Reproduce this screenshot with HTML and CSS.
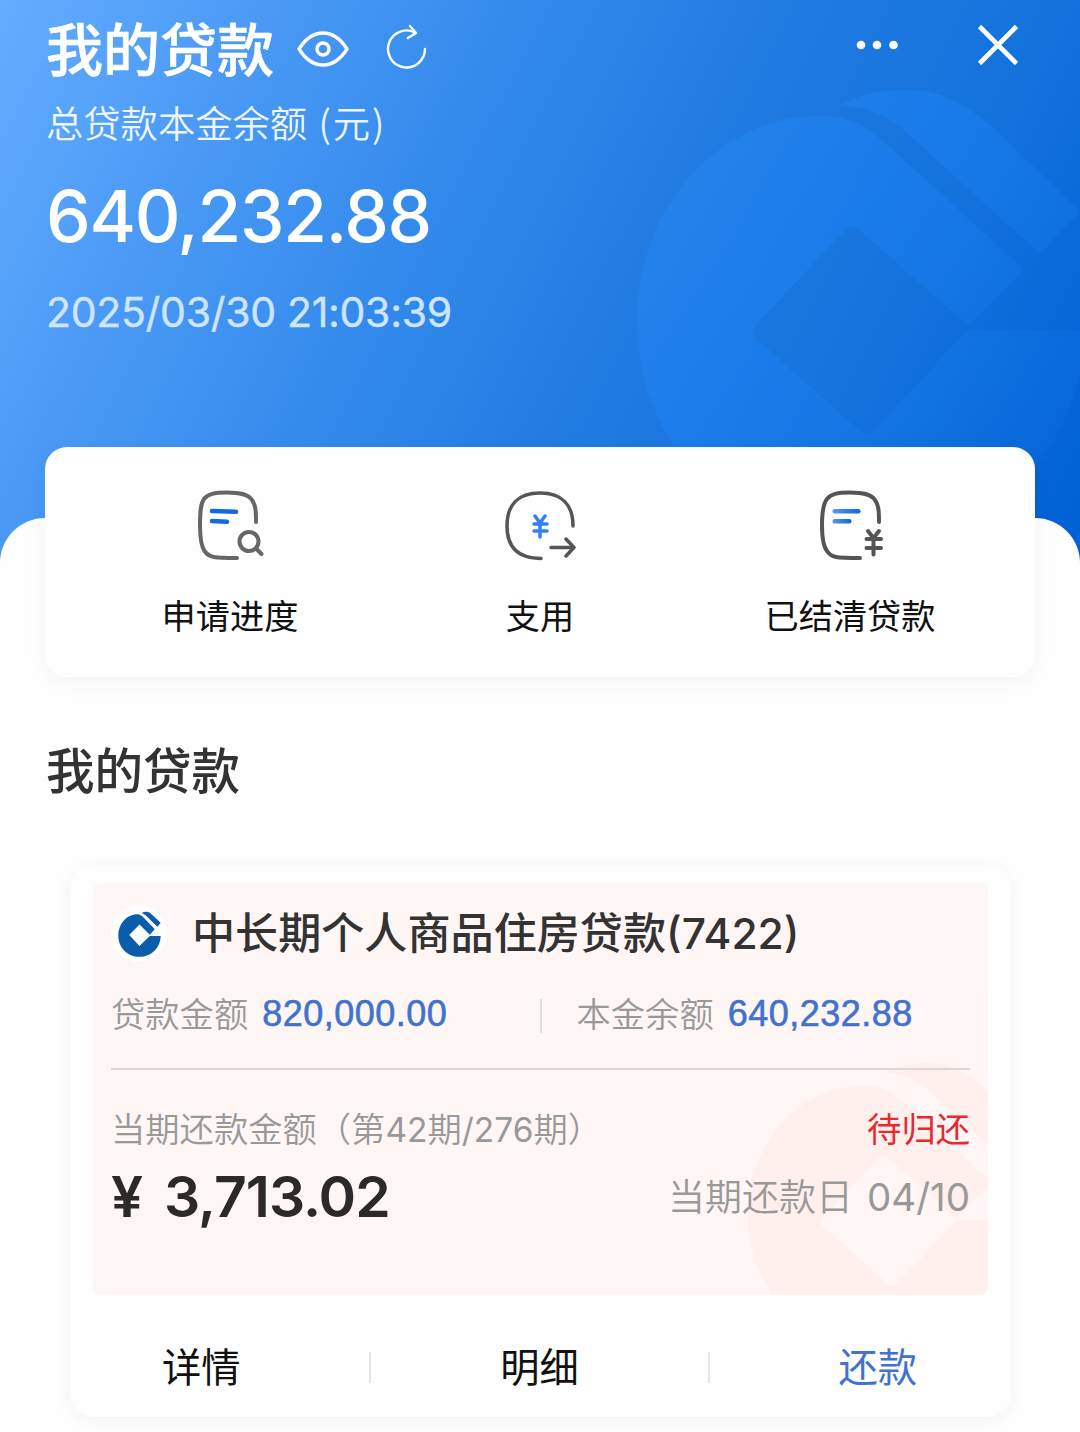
FILE: index.html
```html
<!DOCTYPE html>
<html lang="zh-CN">
<head>
    <meta charset="UTF-8">
    <title>我的贷款</title>
    <link rel="stylesheet" href="styles.css">
</head>
<body>
<svg class="defs" width="0" height="0">
    <defs>
        <linearGradient id="mark-blue" gradientUnits="userSpaceOnUse" x1="637" y1="130" x2="1085" y2="460">
            <stop offset="0" stop-color="#2b8cf5" stop-opacity=".35"/>
            <stop offset=".4" stop-color="#1c80f2" stop-opacity=".6"/>
            <stop offset="1" stop-color="#0d6ee2" stop-opacity=".25"/>
        </linearGradient>
        <linearGradient id="line-blue" x1="0" y1="0" x2="1" y2="0">
            <stop offset="0" stop-color="#5a97f3"/>
            <stop offset="1" stop-color="#0f62e2"/>
        </linearGradient>
        <path id="mark-body" d="M820 116C850 116 868 127 890 147L1020 266Q1024 270 1020 274L972 322Q968 326 964 322L858 229Q852 223 846 229L755 326Q750 332 755 338L862 433Q867 437 872 432L968 330H1085C1083 451 985 547 862 547C735 547 637 445 637 320C637 206 720 116 820 116Z"/>
        <path id="mark-wing" d="M837 106C880 84 932 85 964 106C974 112 984 120 992 127L1080 211L1040 254L904 130C882 111 860 106 837 106Z"/>
    </defs>
</svg>
<div class="page">
    <header class="hero">
        <svg class="hero-mark" viewBox="637 88 448 460" fill="url(#mark-blue)">
            <use href="#mark-body"/>
            <use href="#mark-wing"/>
        </svg>
        <div class="bar">
            <h1>我的贷款</h1>
            <svg class="eye" viewBox="0 0 54 38" fill="none" stroke="#fff" stroke-width="3.4">
                <path d="M3 19C10 8 18 3 27 3C36 3 44 8 51 19C44 30 36 35 27 35C18 35 10 30 3 19Z" stroke-linejoin="round"/>
                <circle cx="27" cy="19" r="6"/>
            </svg>
            <svg class="refresh" viewBox="0 0 44 46" fill="none" stroke="#fff" stroke-width="2.4" stroke-linecap="round" stroke-linejoin="round">
                <path d="M40 25A18.5 18.5 0 1 1 30 8.500"/>
                <path d="M25 2L31 9L23 14"/>
            </svg>
            <svg class="more" viewBox="0 0 44 12" fill="#fff">
                <circle cx="6" cy="6" r="4.300"/>
                <circle cx="22" cy="6" r="4.300"/>
                <circle cx="38.500" cy="6" r="4.300"/>
            </svg>
            <svg class="close" viewBox="0 0 42 42" stroke="#fff" stroke-width="4.600">
                <path d="M2.500 2.500L39.500 39.500M39.500 2.500L2.500 39.500"/>
            </svg>
        </div>
        <p class="sub">总贷款本金余额 <span>(元)</span></p>
        <p class="total">640,232.88</p>
        <p class="time">2025/03/30 21:03:39</p>
    </header>

    <main class="sheet">
        <nav class="actions">
            <a class="action">
                <svg viewBox="0 0 72 76" fill="none" stroke="#666" stroke-width="4" stroke-linecap="round">
                    <path d="M62 34C62 22 61.500 17 58 12C54 6 46 4.500 33 4.500C20 4.500 14 6 10 11C6.500 16 6 24 6 37C6 50 7 58 10.500 63C15 69.500 20 70 43 70"/>
                    <path d="M18 23L42 23.700M18 33L33 33.700" stroke="#1468e8" stroke-width="4.600"/>
                    <circle cx="55" cy="53.500" r="9.500"/>
                    <path d="M62 60.500L67.500 66"/>
                </svg>
                <span>申请进度</span>
            </a>
            <a class="action">
                <svg viewBox="0 0 72 76" fill="none" stroke="#555" stroke-width="3.500" stroke-linecap="round" stroke-linejoin="round">
                    <path d="M69 38C69 17 58 5 36 5C14 5 3 17 3 38C3 60 15 70.500 37 70.500"/>
                    <path d="M31 28L36 35L41 28M30 36H43M30 43H43M36 35V49" stroke="#3280f6"/>
                    <path d="M47 59.500H70M62 51L70 59.500L62 68"/>
                </svg>
                <span>支用</span>
            </a>
            <a class="action">
                <svg viewBox="0 0 72 76" fill="none" stroke="#555" stroke-width="4" stroke-linecap="round">
                    <path d="M65 34C65 22 64.500 17 61 12C57 6 49 4.500 36 4.500C23 4.500 17 6 13 11C9 16 8 24 8 37C8 50 9 58 13 63C17 69.500 22 70 46 70"/>
                    <rect x="18.500" y="21" width="28" height="4.500" rx="2.200" fill="url(#line-blue)" stroke="none"/>
                    <rect x="18.500" y="31" width="19" height="4.500" rx="2.200" fill="url(#line-blue)" stroke="none"/>
                    <path d="M54 43L59.500 50L65 43M52.500 51H67M52.500 60H67M59.500 51V66.500"/>
                </svg>
                <span>已结清贷款</span>
            </a>
        </nav>

        <h2>我的贷款</h2>

        <section class="loan">
            <div class="info">
                <svg class="info-mark" viewBox="637 88 448 460" fill="#ffe9e6">
                    <use href="#mark-body"/>
                    <use href="#mark-wing" x="16" y="-10"/>
                </svg>
                <div class="name">
                    <span class="logo">
                        <svg viewBox="50 60 136 144" fill="#0b5cab">
                            <path d="M112 72C118 72 123 75 128 80L164 118L149 134L118 103L87 135L118 168L149 138H182C181 175 153 201 118 201C82 201 54 173 54 137C54 100 80 72 112 72Z"/>
                            <path d="M124 69C134 63 145 64 152 70L182 98L172 110L138 77C134 73 130 70 124 69Z"/>
                        </svg>
                    </span>
                    <h3>中长期个人商品住房贷款<span>(7422)</span></h3>
                </div>
                <div class="amounts">
                    <div class="amount">贷款金额<b>820,000.00</b></div>
                    <div class="amount">本金余额<b>640,232.88</b></div>
                </div>
                <div class="period">
                    <span>当期还款金额（第<i>42</i>期<i>/276</i>期）</span>
                    <em>待归还</em>
                </div>
                <div class="repay">
                    <strong><span>¥</span>3,713.02</strong>
                    <span class="due">当期还款日<i>04/10</i></span>
                </div>
            </div>
            <div class="tabs">
                <a>详情</a>
                <a>明细</a>
                <a class="on">还款</a>
            </div>
        </section>
    </main>
</div>
</body>
</html>
```
FILE: styles.css
```css
* {
    margin: 0;
    padding: 0;
    box-sizing: border-box;
}
body {
    font-family: "Noto Sans CJK SC", sans-serif;
    background: #fefefe;
}
i, em {
    font-style: normal;
}
.defs {
    display: block;
}
.page {
    width: 1080px;
    height: 1432px;
    overflow: hidden;
}

/* 顶部 */
.hero {
    position: relative;
    height: 570px;
    padding: 0 46px;
    color: #fff;
    overflow: hidden;
    background: linear-gradient(117deg, #64adff 0%, #4c9bf6 18%, #3289eb 40%, #237de3 55%, #1271dc 79%, #0061d5 98%);
}
.hero-mark {
    position: absolute;
    left: 637px;
    top: 88px;
    width: 448px;
    height: 460px;
}
.bar {
    display: flex;
    align-items: center;
    height: 96px;
}
.bar h1 {
    width: 228px;
    font-size: 57px;
    font-weight: 500;
    line-height: 90px;
    padding-bottom: 5px;
    -webkit-text-stroke: .6px #fff;
}
.eye {
    width: 54px;
    height: 38px;
    margin: 2px 0 0 22px;
}
.refresh {
    width: 44px;
    height: 46px;
    margin: 0 auto 2px 35px;
}
.more {
    width: 44px;
    height: 12px;
    margin: 0 78px 6px 0;
}
.close {
    width: 42px;
    height: 42px;
    margin: 0 15px 7px 0;
}
.sub {
    font-size: 37.3px;
    font-weight: 350;
    line-height: 52px;
    opacity: .9;
}
.sub span {
    margin-left: 3px;
    letter-spacing: 2px;
}
.total {
    margin-top: 28px;
    font: 500 71px/80px Inter, sans-serif;
    letter-spacing: -1.300px;
}
.time {
    margin-top: 31px;
    font: 400 41px/50px Inter, sans-serif;
    letter-spacing: -.3px;
    -webkit-text-stroke: .4px #cfe4ff;
    color: #cfe4ff;
}

/* 白色内容区 */
.sheet {
    position: relative;
    margin-top: -52px;
    padding: 0 45px;
    border-radius: 45px 45px 0 0;
    background: #fefefe;
}
.actions {
    display: flex;
    position: relative;
    top: -71px;
    height: 230px;
    padding: 41px 30px 0;
    margin-bottom: -71px;
    border-radius: 22px;
    background: #fefefe;
    box-shadow: 0 6px 22px rgba(0, 0, 0, .04);
}
.action {
    flex: 1;
    display: flex;
    flex-direction: column;
    align-items: center;
    font-size: 34.200px;
    line-height: 50px;
    color: #111;
}
.action svg {
    width: 72px;
    height: 76px;
    margin-bottom: 25px;
}
.sheet h2 {
    margin: 56px 0 0 1px;
    font-size: 48.500px;
    font-weight: 500;
    line-height: 70px;
    color: #333;
}

/* 贷款卡片 */
.loan {
    width: 941px;
    height: 552px;
    margin: 62px 0 0 25px;
    padding: 18px 23px 0;
    border-radius: 22px;
    background: #fefefe;
    box-shadow: 0 3px 16px rgba(0, 0, 0, .05);
}
.info {
    position: relative;
    height: 412px;
    padding: 0 18px;
    border-radius: 8px;
    overflow: hidden;
    background: linear-gradient(150deg, #fef7f6, #fff6f5);
}
.info-mark {
    position: absolute;
    left: 654px;
    top: 185px;
    width: 284px;
    height: 290px;
    opacity: .5;
    overflow: visible;
}
.name {
    display: flex;
    align-items: center;
    position: relative;
    height: 100px;
}
.logo {
    display: flex;
    align-items: center;
    justify-content: center;
    width: 56px;
    height: 56px;
    margin-top: 2px;
    border-radius: 50%;
    background: #fff;
}
.logo svg {
    width: 45px;
    height: 48px;
}
.name h3 {
    margin-left: 25px;
    padding-bottom: 7px;
    font-size: 43.100px;
    font-weight: 500;
    color: #333;
}
.name h3 span {
    font-family: Inter, sans-serif;
    font-size: 42.500px;
}
.amounts {
    display: flex;
    height: 87px;
    padding-top: 4px;
    border-bottom: 2px solid #dcd8d7;
    position: relative;
}
.amount {
    display: flex;
    flex: 1;
    font-size: 34.300px;
    font-weight: 350;
    line-height: 50px;
    color: #999;
}
.amount + .amount::before {
    content: "";
    width: 2px;
    height: 34px;
    margin: 12px 35px 0 -1px;
    background: #ddd;
}
.amount b {
    margin-left: 14px;
    font: 400 36px/54px "Liberation Sans", sans-serif;
    letter-spacing: .5px;
    -webkit-text-stroke: .6px #4272cf;
    color: #4272cf;
}
.period {
    display: flex;
    justify-content: space-between;
    position: relative;
    margin-top: 32px;
    font-size: 34.300px;
    font-weight: 350;
    line-height: 50px;
    color: #999;
}
.period i, .due i {
    font-family: Inter, sans-serif;
    font-weight: 400;
}
.period i {
    font-size: 33.500px;
}
.period em {
    font-weight: 400;
    color: #e32b30;
}
.repay {
    display: flex;
    justify-content: space-between;
    align-items: center;
    position: relative;
    height: 84px;
}
.repay strong {
    font: 600 57px/84px Inter, sans-serif;
    letter-spacing: -1px;
    color: #2b2929;
}
.repay strong span {
    display: inline-block;
    width: 53px;
}
.due {
    padding-bottom: 5px;
    font-size: 37px;
    font-weight: 350;
    color: #999;
}
.due i {
    margin-left: 14px;
    font-size: 38.500px;
}
.tabs {
    display: flex;
    justify-content: space-between;
    align-items: center;
    height: 118px;
    padding: 22px 71px 0 69px;
    font-size: 39.300px;
    line-height: 56px;
    color: #111;
}
.tabs a {
    display: block;
}
.tabs .on {
    color: #4272cf;
}
/* 按钮之间的分隔线 */
.tabs::before,
.tabs::after {
    content: "";
    width: 2px;
    height: 31px;
    margin-top: 4px;
    background: #e6e6e6;
}
.tabs a:nth-child(1) { order: 1; }
.tabs::before { order: 2; }
.tabs a:nth-child(2) { order: 3; }
.tabs::after { order: 4; }
.tabs a:nth-child(3) { order: 5; }
```
